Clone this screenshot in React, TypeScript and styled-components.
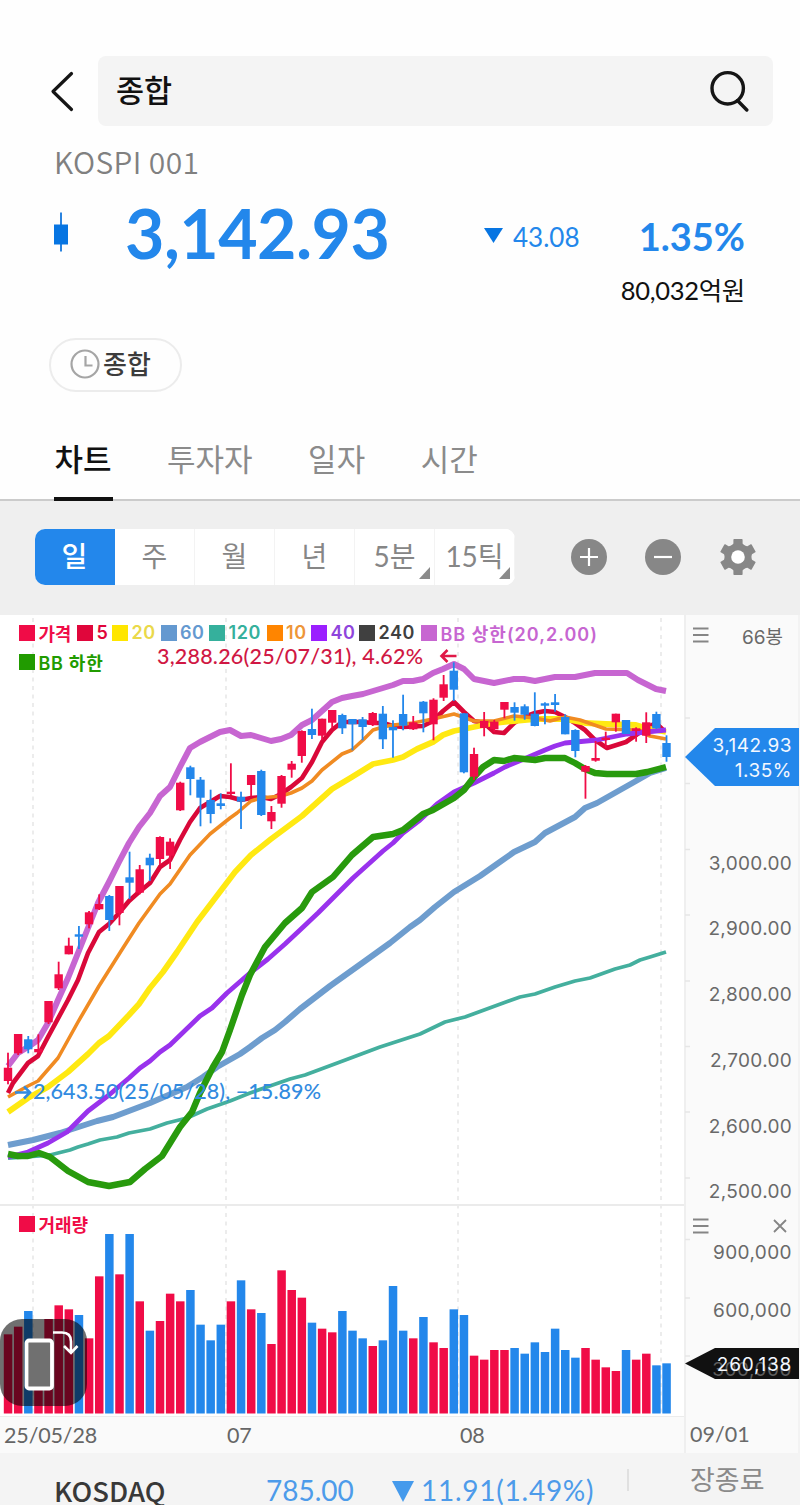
import React from 'react';
import styled, { createGlobalStyle } from 'styled-components';

const RED = '#f00c47';
const BLUE = '#2387eb';
const KR = '"Noto Sans CJK KR", sans-serif';
const LATO = 'Lato, "Noto Sans CJK KR", sans-serif';
const INTER = 'Inter, "Noto Sans CJK KR", sans-serif';

const GlobalStyle = createGlobalStyle`
  * { box-sizing: border-box; }
  body { margin: 0; background: #fff; font-family: ${KR}; color: #111; }
`;

const Page = styled.main`
  width: 800px;
  height: 1505px;
  overflow: hidden;
  display: flex;
  flex-direction: column;
  background: #fefefe;
`;

const TopBar = styled.header`
  display: flex;
  align-items: center;
  height: 70px;
  margin: 56px 27px 0 50px;
  gap: 23px;
  flex: none;
`;

const SearchBox = styled.div`
  flex: 1;
  height: 70px;
  display: flex;
  align-items: center;
  justify-content: space-between;
  padding: 0 23px 0 18px;
  border-radius: 8px;
  background: #f4f4f4;
  font-size: 30.500px;
  font-weight: 500;
  line-height: 40px;
  span { padding-bottom: 4px; }
`;

const IndexCode = styled.div`
  height: 44px;
  margin: 13px 0 0 54px;
  font-size: 30px;
  line-height: 44px;
  font-weight: 350;
  color: #808080;
  letter-spacing: 0.4px;
  flex: none;
`;

const QuoteRow = styled.section`
  display: flex;
  align-items: center;
  height: 84px;
  padding: 0 55px 0 53px;
  margin-top: 7px;
  font-family: ${LATO};
  color: ${BLUE};
  flex: none;
`;

const Price = styled.strong`
  width: 362px;
  margin-left: 56px;
  padding-top: 2px;
  font-size: 68px;
  line-height: 84px;
  font-weight: 700;
  letter-spacing: -0.550px;
`;

const Change = styled.span`
  display: flex;
  align-items: center;
  gap: 10px;
  font-size: 26px;
  margin-left: -3px;
  padding-top: 10px;
  svg { margin-bottom: 4px; }
`;

const Percent = styled.strong`
  flex: 1;
  text-align: right;
  font-size: 38px;
  font-weight: 700;
  padding-top: 8px;
`;

const Amount = styled.div`
  height: 40px;
  margin-top: -4px;
  padding-right: 55px;
  text-align: right;
  font-family: ${LATO};
  font-size: 25.500px;
  letter-spacing: -0.300px;
  line-height: 40px;
  color: #111;
  flex: none;
`;

const Chip = styled.div`
  display: flex;
  align-items: center;
  gap: 2px;
  width: 133px;
  height: 54px;
  margin: 28px 0 0 49px;
  padding-left: 18px;
  border: 2px solid #ececec;
  border-radius: 27px;
  font-size: 26px;
  line-height: 36px;
  font-weight: 500;
  color: #3c3c3c;
  flex: none;
  span { padding-bottom: 4px; }
`;

const Tabs = styled.nav`
  display: flex;
  gap: 54px;
  height: 71px;
  margin-top: 38px;
  padding-left: 54px;
  border-bottom: 2px solid #cbcbcb;
  flex: none;
`;

const Tab = styled.div<{ $active?: boolean }>`
  height: 71px;
  font-size: 31px;
  line-height: 56px;
  font-weight: ${(p) => (p.$active ? 500 : 400)};
  color: ${(p) => (p.$active ? '#111' : '#8b8b8b')};
  border-bottom: 4px solid ${(p) => (p.$active ? '#111' : 'transparent')};
  padding: 0 1px 0 0.500px;
`;

const Toolbar = styled.div`
  display: flex;
  align-items: center;
  height: 114px;
  padding: 0 0 2px 35px;
  background: #efefef;
  flex: none;
`;

const Periods = styled.div`
  display: flex;
  width: 480px;
  height: 56px;
  border-radius: 10px;
  overflow: hidden;
  background: #fff;
  margin-right: 56px;
`;

const Period = styled.div<{ $active?: boolean; $menu?: boolean }>`
  position: relative;
  width: 80px;
  font-family: ${LATO};
  font-size: 28px;
  line-height: 55px;
  text-align: center;
  color: ${(p) => (p.$active ? '#fff' : '#868686')};
  background: ${(p) => (p.$active ? BLUE : '#fff')};
  border-right: 1px solid ${(p) => (p.$active ? BLUE : '#f3f3f3')};
  font-weight: ${(p) => (p.$active ? 500 : 400)};
  &::after {
    content: '';
    display: ${(p) => (p.$menu ? 'block' : 'none')};
    position: absolute;
    right: 4px;
    bottom: 6px;
    border-left: 11px solid transparent;
    border-bottom: 12px solid #8b8b8b;
  }
`;

const Tools = styled.div`
  display: flex;
  align-items: center;
  gap: 37.500px;
`;

const ChartArea = styled.section`
  position: relative;
  display: flex;
  height: 838px;
  background: #fff;
  flex: none;
`;

const Plot = styled.div`
  width: 684px;
  display: flex;
  flex-direction: column;
`;

const Drawing = styled.svg`
  display: block;
  flex: none;
`;

const Dates = styled.div`
  display: flex;
  height: 37px;
  padding-left: 4px;
  background: #fafafa;
  border-top: 1px solid #ececec;
  font-family: ${LATO};
  font-size: 21.500px;
  line-height: 37px;
  color: #666;
`;

const DateLabel = styled.span<{ $w: number }>`
  width: ${(p) => p.$w}px;
  letter-spacing: -0.150px;
`;

const Axis = styled.aside`
  width: 116px;
  display: flex;
  flex-direction: column;
  background: #fafafa;
  border-left: 2px solid #efefef;
  border-right: 2px solid #f3f3f3;
  font-family: ${INTER};
  font-size: 19px;
  color: #696969;
`;

const AxisHead = styled.div<{ $h: number; $top?: number; $right: number }>`
  display: flex;
  align-items: center;
  justify-content: space-between;
  height: ${(p) => p.$h}px;
  margin-top: ${(p) => p.$top ?? 0}px;
  padding: 0 ${(p) => p.$right}px 0 7px;
  flex: none;
`;

const Scale = styled.div<{ $top: number; $step: number; $ls: number }>`
  display: flex;
  flex-direction: column;
  margin-top: ${(p) => p.$top}px;
  flex: none;
  & > div {
    position: relative;
    height: ${(p) => p.$step}px;
    line-height: ${(p) => p.$step}px;
    padding-right: 6px;
    text-align: right;
    letter-spacing: ${(p) => p.$ls}px;
  }
`;

const EndDate = styled.div`
  margin: auto 0 0 4px;
  height: 37px;
  line-height: 37px;
  font-family: ${LATO};
  font-size: 21.500px;
  flex: none;
`;

const Legend = styled.div`
  position: absolute;
  left: 19px;
  top: 3px;
  width: 640px;
  display: flex;
  flex-wrap: wrap;
  font-family: ${INTER};
  font-size: 18px;
  font-weight: 600;
`;

const LegendItem = styled.span<{ $color: string; $w: number; $ls?: number; $text?: string }>`
  display: flex;
  align-items: center;
  gap: 3.500px;
  width: ${(p) => p.$w}px;
  height: 29px;
  white-space: nowrap;
  letter-spacing: ${(p) => p.$ls ?? 0.6}px;
  color: ${(p) => p.$text ?? p.$color};
  &::before {
    content: '';
    flex: none;
    width: 16px;
    height: 16px;
    background: ${(p) => p.$color};
  }
`;

const VolumeLegend = styled(Legend)`
  top: 594px;
`;

const Tag = styled.div<{ $top: number; $h: number; $bg: string }>`
  position: absolute;
  left: 685px;
  top: ${(p) => p.$top}px;
  width: 114px;
  height: ${(p) => p.$h}px;
  display: flex;
  flex-direction: column;
  justify-content: center;
  padding: 2px 7px 0 0;
  text-align: right;
  font-family: ${INTER};
  font-size: 19px;
  line-height: 25px;
  letter-spacing: 0.500px;
  color: #f4f8ff;
  background: ${(p) => p.$bg};
  clip-path: polygon(0 50%, 30px 0, 100% 0, 100% 100%, 30px 100%);
`;

const TagBack = styled.span`
  position: absolute;
  right: 7px;
  top: 9px;
  color: #5c5c5c;
`;

const TagFront = styled.span`
  position: relative;
  letter-spacing: 0.750px;
`;

const RotateButton = styled.button`
  position: absolute;
  left: 0;
  top: 704px;
  width: 87px;
  height: 87px;
  padding: 0;
  border: 0;
  border-radius: 22px;
  background: rgba(0, 0, 0, 0.56);
`;

const Footer = styled.footer`
  display: flex;
  flex: 1;
  padding: 22px 0 0 54px;
  background: #f4f4f4;
  font-family: ${LATO};
  font-size: 28px;
  line-height: 30px;
  color: #4d9bea;
  white-space: nowrap;
`;

const FootName = styled.span`
  width: 212px;
  font-family: ${KR};
  font-size: 27.500px;
  font-weight: 500;
  color: #383838;
`;

const FootValue = styled.span`
  width: 126px;
`;

const FootChange = styled.span`
  display: flex;
  width: 235px;
  gap: 7px;
  letter-spacing: 0.750px;
  svg { margin-top: 6px; flex: none; }
`;

const FootState = styled.span`
  height: 22px;
  margin-top: -6px;
  padding-left: 61px;
  border-left: 2px solid #e0e0e0;
  font-family: ${KR};
  font-size: 27px;
  line-height: 20px;
  color: #8a8a8a;
`;

const X0 = 8;
const STEP = 10.131;
const cx = (i: number) => X0 + STEP * i;

// direction, high, body top, body bottom, low (plot coordinates)
type Candle = [string, number, number, number, number];
const candles: Candle[] = [
  ['r', 437.7, 452.7, 466, 469.3], ['r', 419, 419, 438.3, 440], ['b', 421, 424.3, 434.3, 438.3], ['r', 419.3, 434, 437.3, 438.3],
  ['r', 386, 386, 407.3, 409], ['r', 346.7, 359.3, 373.3, 375], ['r', 322.7, 330.7, 339.3, 339.3], ['b', 311, 319.3, 321.7, 334],
  ['r', 296, 297.3, 309.3, 313.3], ['r', 279.3, 289, 294.3, 295], ['b', 280, 281, 305, 316], ['r', 271, 271, 298, 310.3],
  ['b', 236.7, 262.3, 267.7, 284], ['r', 250, 254.3, 277.7, 279.3], ['b', 238.7, 242.7, 250.3, 266], ['r', 221.3, 222, 244, 250],
  ['r', 223.3, 226.7, 240.7, 254], ['r', 166.7, 167.7, 195.3, 196], ['b', 150.7, 152.3, 164, 180.3], ['b', 162, 164.7, 182.7, 211.3],
  ['b', 174.7, 185, 199, 208.3], ['b', 178.3, 188.3, 191, 194.3], ['r', 148.3, 176.7, 179, 180], ['b', 176.7, 181.7, 186.7, 214],
  ['r', 160, 160, 170, 181], ['b', 154.7, 156, 200, 201], ['r', 191, 197, 206.3, 214], ['r', 160, 161, 188.7, 192.7],
  ['r', 146, 148.7, 154.7, 162.7], ['r', 115.3, 116, 141, 147.7], ['b', 93.7, 114, 120, 124], ['r', 103.7, 103.7, 120.7, 125],
  ['r', 95, 95, 107.7, 113.3], ['b', 98.7, 100, 113.3, 119], ['b', 104, 104, 109.3, 135.3], ['b', 102, 104.3, 112, 125.3],
  ['r', 97, 98, 110, 111], ['b', 91, 98.7, 124.3, 134], ['b', 105.3, 112, 115.3, 142.7], ['b', 79.7, 99, 110.7, 115.3],
  ['r', 101, 107.3, 114.3, 115], ['b', 86, 86.7, 98.3, 117.3], ['r', 83.3, 84.7, 109.3, 125.3], ['r', 60, 69.3, 82.7, 86],
  ['b', 47.3, 55.7, 74.7, 86], ['b', 98, 98.3, 157.3, 158.3], ['r', 132.7, 139, 161.7, 165], ['r', 97, 106, 113, 121.3],
  ['r', 105, 106.7, 114.3, 116.7], ['r', 87, 87, 94.7, 103.3], ['b', 87.3, 92, 97.7, 105.7], ['b', 89.3, 91.3, 99.7, 104.7],
  ['b', 77.3, 98.7, 111, 111.3], ['b', 87.3, 88.3, 90.7, 109.3], ['b', 79, 87.3, 90, 96.7], ['b', 99.3, 102, 119.3, 119.3],
  ['b', 114.3, 115, 136, 142.3], ['r', 150, 151, 156.7, 183.7], ['r', 126, 143, 145.7, 146.7], ['r', 116.7, 122.7, 125, 132.7],
  ['r', 98.7, 98.7, 107.3, 116.7], ['b', 105, 105, 119, 119], ['r', 112.3, 113.3, 116, 126.7], ['r', 97.3, 107.3, 120.7, 128],
  ['b', 96.7, 99, 113.3, 114], ['b', 120.3, 128, 142, 146.7],
];

// distance of each bar's top from the start of the volume pane, in thirds of a pixel
const volume =
  'r403 r380 b333 r440 r357 r316 r328 b345 r415 r229 b102 r223 b102 r304 b392 r363 r281 r304 b270 b374 b421 b374 r304 b241 r328 b339 r432 r211 r270 r293 b368 r386 r397 b333 b392 b415 r438 b421 b258 b392 r415 b351 r427 r444 b328 b345 r467 r479 r450 r450 b444 b461 b427 b456 b386 b450 b473 r444 r479 r502 r513 b450 r479 r461 b496 b490'.split(' ');

type Series = { color: string; width: number; points: string };
const series: Series[] = [
  { color: '#d90839', width: 4.6, points: '8,1093 13,1083 28,1063 38,1056 48,1037 68,1000 78,980 88,953 99,932 109,924 119,913 129,901 139,892 150,883 160,867 170,860 180,840 190,822 200,808 210,802 220,796 230,797 241,800 251,798 261,797 271,799 281,794 291,787 302,778 312,762 322,742 332,730 342,722 352,722 363,722 373,723 383,723 393,726 403,727 423,726 433,721 443,711 454,702 464,712 474,721 484,723 494,732 504,733 514,723 524,717 535,713 545,711 555,712 565,717 575,723 585,730 595,740 607,748 626,742 636,735 646,728 656,723 664,731' },
  { color: '#ffe912', width: 5.8, points: '8,1112 28,1098 48,1087 68,1072 88,1054 99,1043 109,1036 129,1015 139,1004 150,988 163,972 177,952 197,922 213,901 235,872 251,855 271,839 302,816 332,789 352,777 373,764 393,760 403,757 417,749 433,742 443,735 454,731 474,727 494,723 514,721 535,719 565,719 585,723 606,724 636,725 646,728 666,732' },
  { color: '#6e9dce', width: 6, points: '8,1145 33,1140 60,1133 97,1121 113,1117 150,1103 187,1087 203,1077 217,1067 240,1054 250,1047 262,1038 275,1030 285,1022 300,1009 330,986 365,961 390,943 410,927 420,920 435,907 454,892 480,876 497,864 514,852 535,842 545,833 575,817 585,808 597,803 636,781 650,773 666,768' },
  { color: '#44af9e', width: 3.8, points: '8,1158 50,1155 70,1150 78,1147 88,1144 100,1140 117,1137 129,1133 150,1129 167,1123 187,1118 207,1109 230,1101 250,1093 290,1079 305,1075 340,1062 380,1047 420,1034 445,1022 465,1017 495,1006 520,997 535,994 555,987 575,981 590,978 615,969 630,965 640,960 650,957 666,952' },
  { color: '#f08b22', width: 3.6, points: '8,1097 28,1086 38,1081 58,1058 78,1022 99,986 123,948 139,923 160,894 170,884 190,855 210,834 230,818 237,813 251,801 261,798 281,796 291,793 302,788 312,781 322,770 342,754 352,750 363,740 373,730 383,727 393,725 413,723 433,719 454,714 474,721 494,721 514,716 535,718 550,721 565,717 580,720 606,729 636,730 650,736 666,739' },
  { color: '#9932ed', width: 4.8, points: '8,1157 28,1152 48,1143 67,1132 88,1111 109,1095 129,1078 140,1068 150,1061 160,1052 170,1045 200,1016 212,1008 227,993 250,973 268,959 285,944 300,930 318,913 353,878 383,851 393,843 403,833 420,820 437,804 454,792 474,783 484,778 494,773 505,767 524,759 545,750 555,746 565,743 597,740 627,734 646,732 666,730' },
  { color: '#c766d1', width: 6, points: '8,1066 18,1053 28,1047 38,1040 48,1023 58,1000 68,978 78,953 88,928 98,903 109,882 119,862 129,843 139,827 150,813 160,796 170,787 180,767 190,748 200,742 210,737 220,732 230,730 241,736 251,735 261,738 271,741 281,739 291,735 302,725 312,720 322,711 332,702 342,698 352,696 363,694 373,691 383,688 393,685 403,681 413,681 423,679 433,673 443,669 454,664 464,669 474,679 494,683 514,679 524,679 535,681 555,677 575,677 595,673 627,673 638,680 656,689 666,691' },
  { color: '#289a0d', width: 6.4, points: '8,1154 18,1156 28,1156 39,1153 50,1157 68,1171 88,1182 109,1186 130,1182 145,1169 162,1156 180,1127 192,1112 200,1093 213,1067 222,1052 230,1030 242,995 250,975 265,947 285,923 302,908 312,892 333,877 352,855 373,837 393,834 403,830 423,814 433,810 454,798 464,790 474,777 483,767 494,760 504,761 514,758 535,760 545,758 565,758 575,763 585,769 595,773 607,774 636,774 647,772 666,767' },
];

const BackIcon = () => (
  <svg width="25" height="42" viewBox="50 70 25 42" fill="none" stroke="#151515" strokeWidth="3.2" strokeLinecap="round" strokeLinejoin="round">
    <path d="M71.5 73.5 53 91.5l18.500 18" />
  </svg>
);

const SearchIcon = () => (
  <svg width="40" height="42" viewBox="710 70 40 42" fill="none" stroke="#151515" strokeWidth="3.4" strokeLinecap="round">
    <circle cx="727.700" cy="88.300" r="15.700" />
    <path d="m737.500 100.500 9.300 9.500" />
  </svg>
);

const CandleIcon = () => (
  <svg width="16" height="40" viewBox="53 211 16 40">
    <path d="M61 211.500v39" stroke="#2a83df" strokeWidth="2" />
    <path d="M54 223.500h14v20H54z" fill="#0775e2" />
  </svg>
);

const ClockIcon = () => (
  <svg width="32" height="32" viewBox="0 0 32 32" fill="none" stroke="#a5a5a5" strokeWidth="2.200">
    <circle cx="16.000" cy="15" r="13.500" />
    <path d="M16.500 7v9.500h7" />
  </svg>
);

const GearIcon = () => {
  const teeth = [0, 60, 120, 180, 240, 300];
  return (
    <svg width="38" height="38" viewBox="-20 -19 38 38">
      <g fill="#878787">
        <circle r="13.500" />
        {teeth.map((a) => (
          <path key={a} d="M-6.500-11-4.600-13.500V-17.300Q-4.600-18-3.900-18H3.900Q4.600-18 4.600-17.300V-13.500L6.500-11z" transform={`rotate(${a})`} />
        ))}
      </g>
      <circle r="6.800" fill="#fff" />
    </svg>
  );
};

const RoundIcon = ({ plus }: { plus?: boolean }) => (
  <svg width="36" height="36" viewBox="0 0 36 36">
    <circle cx="18" cy="18" r="18" fill="#878787" />
    <path d={plus ? 'M9 18h18M18 9v18' : 'M9 18h18'} stroke="#fff" strokeWidth="2.200" />
  </svg>
);

const MenuIcon = () => (
  <svg width="16" height="16" viewBox="0 0 16 16" stroke="#858585" strokeWidth="1.800">
    <path d="M0 1.500h15.500M0 8h15.500M0 14.500h15.500" />
  </svg>
);

const CloseIcon = () => (
  <svg width="14" height="14" viewBox="0 0 14 14" stroke="#858585" strokeWidth="1.800">
    <path d="m1 1 12 12M13 1 1 13" />
  </svg>
);

const Down = ({ w, h, color }: { w: number; h: number; color: string }) => (
  <svg width={w} height={h}>
    <path d={`M0 0H${w}L${w / 2} ${h}z`} fill={color} />
  </svg>
);

const PriceAndVolume = () => (
  <Drawing width="690" height="801" viewBox="0 0 690 801">
    <g stroke="#e4e4e4" strokeWidth="1.400" strokeDasharray="4 4.500">
      {[33, 226, 458, 661].map((x) => (
        <path key={x} d={`M${x} 3V801`} />
      ))}
    </g>
    <path d="M0 590H684" stroke="#ebebeb" strokeWidth="2" />
    <g transform="translate(0 -615)" fill="none" strokeLinejoin="round">
      {series.map((s) => (
        <polyline key={s.color} points={s.points} stroke={s.color} strokeWidth={s.width} />
      ))}
    </g>
    {candles.map(([d, high, top, bottom, low], i) => (
      <g key={i} fill={d === 'r' ? RED : BLUE}>
        <rect x={cx(i) - 0.900} y={high} width="1.800" height={low - high} />
        <rect x={cx(i) - 4.200} y={top} width="8.400" height={bottom - top} />
      </g>
    ))}
    {volume.map((v, i) => {
      const top = 585 + Number(v.slice(1)) / 3;
      return <rect key={i} x={cx(i) - 4.200} y={top} width="8.500" height={798.500 - top} fill={v[0] === 'r' ? RED : BLUE} />;
    })}
    <g fontFamily={LATO} fontSize="21.500" fontWeight="500">
      <text x="157" y="49" fill="#d01743" textLength="266" lengthAdjust="spacing">3,288.26(25/07/31), 4.62%</text>
      <text x="33" y="484" fill="#328be0" textLength="288" lengthAdjust="spacing">2,643.50(25/05/28), −15.89%</text>
    </g>
    <path d="M456.500 41H442M447.500 35l-6 6 6 6" fill="none" stroke="#e01847" strokeWidth="2.600" />
    <path d="M15 477.500H30M24 471.500l6 6-6 6" fill="none" stroke="#328be0" strokeWidth="2.600" />
  </Drawing>
);

const AxisTicks = styled.svg`
  position: absolute;
  left: 685px;
  top: 0;
`;

const legend = [
  { t: '가격', c: RED, w: 58, ls: -0.2 }, { t: '5', c: '#e0063b', w: 35 }, { t: '20', c: '#ffe600', w: 48.5, x: '#ead94a' },
  { t: '60', c: '#6499d0', w: 48.5 }, { t: '120', c: '#35b09c', w: 57.5 }, { t: '10', c: '#ff8500', w: 44.500, x: '#ee9638' },
  { t: '40', c: '#9b1fff', w: 48, x: '#8f45dc' }, { t: '240', c: '#404040', w: 62 }, { t: 'BB 상한(20,2.00)', c: '#c766d1', w: 180, ls: 1 },
  { t: 'BB 하한', c: '#219b00', w: 100, ls: 0.700 },
];

export default function App() {
  return (
    <Page>
      <GlobalStyle />
      <TopBar>
        <BackIcon />
        <SearchBox>
          <span>종합</span>
          <SearchIcon />
        </SearchBox>
      </TopBar>
      <IndexCode>KOSPI 001</IndexCode>
      <QuoteRow>
        <CandleIcon />
        <Price>3,142.93</Price>
        <Change>
          <Down w={19} h={15} color="#0775e2" />
          43.08
        </Change>
        <Percent>1.35%</Percent>
      </QuoteRow>
      <Amount>80,032억원</Amount>
      <Chip>
        <ClockIcon />
        <span>종합</span>
      </Chip>
      <Tabs>
        <Tab $active>차트</Tab>
        <Tab>투자자</Tab>
        <Tab>일자</Tab>
        <Tab>시간</Tab>
      </Tabs>
      <Toolbar>
        <Periods>
          <Period $active>일</Period>
          <Period>주</Period>
          <Period>월</Period>
          <Period>년</Period>
          <Period $menu>5분</Period>
          <Period $menu>15틱</Period>
        </Periods>
        <Tools>
          <RoundIcon plus />
          <RoundIcon />
          <GearIcon />
        </Tools>
      </Toolbar>
      <ChartArea>
        <Plot>
          <PriceAndVolume />
          <Dates>
            <DateLabel $w={223}>25/05/28</DateLabel>
            <DateLabel $w={233}>07</DateLabel>
            <DateLabel $w={60}>08</DateLabel>
          </Dates>
        </Plot>
        <Axis>
          <AxisHead $h={40} $right={15}>
            <MenuIcon />
            66봉
          </AxisHead>
          <Scale $top={175.500} $step={65.800} $ls={0.3}>
            {['3,000.00', '2,900.00', '2,800.00', '2,700.00', '2,600.00', '2,500.00'].map((t) => (
              <div key={t}>{t}</div>
            ))}
          </Scale>
          <AxisHead $h={32} $top={-15} $right={11}>
            <MenuIcon />
            <CloseIcon />
          </AxisHead>
          <Scale $top={-18} $step={58} $ls={0.4}>
            <div>900,000</div>
            <div>600,000</div>
          </Scale>
          <EndDate>09/01</EndDate>
        </Axis>
        <AxisTicks width="6" height="801" stroke="#e6e6e6" strokeWidth="1.500">
          {[103, 168.500, 234.500, 300, 366, 431.500, 497, 563, 624.500, 683, 741].map((y) => (
            <path key={y} d={`M0 ${y}h5`} />
          ))}
        </AxisTicks>
        <Legend>
          {legend.map((l) => (
            <LegendItem key={l.t} $color={l.c} $w={l.w} $ls={l.ls} $text={l.x}>
              {l.t}
            </LegendItem>
          ))}
        </Legend>
        <VolumeLegend>
          <LegendItem $color={RED} $w={100} $ls={0}>거래량</LegendItem>
        </VolumeLegend>
        <Tag $top={113} $h={58} $bg={BLUE}>
          <span>3,142.93</span>
          <span>1.35%</span>
        </Tag>
        <Tag $top={733} $h={31} $bg="#111">
          <TagBack>300,000</TagBack>
          <TagFront>260,138</TagFront>
        </Tag>
        <RotateButton>
          <svg width="87" height="87" viewBox="0 1319 87 87" fill="none" stroke="#fff" strokeWidth="3.200">
            <rect x="26.500" y="1340.500" width="25.500" height="48" rx="2.500" fill="#707070" strokeWidth="3.800" />
            <path d="M53 1332.500h9q9 0 9 9v10.500M64 1346l7 7 6.500-7" strokeWidth="2.600" />
          </svg>
        </RotateButton>
      </ChartArea>
      <Footer>
        <FootName>KOSDAQ</FootName>
        <FootValue>785.00</FootValue>
        <FootChange>
          <Down w={22} h={21} color="#459aec" />
          11.91(1.49%)
        </FootChange>
        <FootState>장종료</FootState>
      </Footer>
    </Page>
  );
}
